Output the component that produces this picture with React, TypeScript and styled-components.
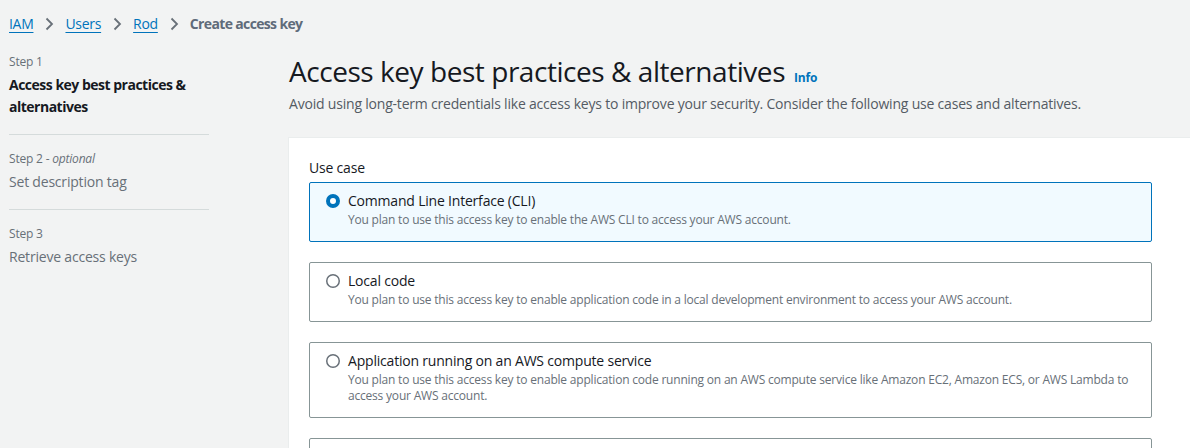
import React from "react";
import styled, { createGlobalStyle } from "styled-components";

const GlobalStyle = createGlobalStyle`
  html, body {
    margin: 0;
    padding: 0;
    background: #f2f3f3;
    font-family: "Open Sans", "Noto Sans", sans-serif;
    color: #16191f;
    letter-spacing: -0.2px;
  }
  * { box-sizing: border-box; }
`;

const Page = styled.div`
  width: 1190px;
  height: 448px;
  overflow: hidden;
  background: #f2f3f3;
`;

const Breadcrumbs = styled.nav`
  display: flex;
  align-items: center;
  height: 46px;
  padding: 1px 0 0 9px;
  font-size: 14px;
`;

const Crumb = styled.a`
  color: #0073bb;
  text-decoration: underline;
  text-underline-offset: 3px;
  text-decoration-thickness: 1px;
  font-weight: 400;
  line-height: 20px;
  letter-spacing: -0.3px;
`;

const CurrentCrumb = styled.span`
  color: #5f6b7a;
  font-weight: 700;
  line-height: 20px;
  letter-spacing: -0.65px;
`;

const Sep = styled.span`
  display: inline-flex;
  align-items: center;
  margin: 0 11px 0 11px;
  color: #687078;
`;

const Layout = styled.div`
  display: flex;
  align-items: flex-start;
`;

const Sidebar = styled.aside`
  width: 200px;
  margin-left: 9px;
  margin-top: 8px;
  flex-shrink: 0;
`;

const StepItem = styled.div<{ last?: boolean }>`
  padding-bottom: 16px;
  margin-bottom: 16px;
  border-bottom: ${(p) => (p.last ? "none" : "1px solid #d5dbdb")};
`;

const StepLabel = styled.div`
  font-size: 12px;
  line-height: 16px;
  color: #687078;
  margin-bottom: 4px;
`;

const Optional = styled.i`
  font-style: italic;
`;

const StepTitle = styled.div<{ active?: boolean }>`
  font-size: 14px;
  line-height: 22px;
  font-weight: ${(p) => (p.active ? 700 : 400)};
  letter-spacing: ${(p) => (p.active ? "-0.5px" : "-0.2px")};
  color: ${(p) => (p.active ? "#16191f" : "#687078")};
`;

const Main = styled.main`
  flex: 1;
  margin-left: 79px;
  margin-top: 7px;
  min-width: 0;
`;

const Header = styled.header`
  padding-left: 1px;
  padding-bottom: 22px;
`;

const TitleRow = styled.div`
  display: flex;
  align-items: baseline;
  gap: 9px;
  height: 40px;
`;

const Title = styled.h1`
  margin: 0;
  font-size: 28px;
  font-weight: 400;
  line-height: 36px;
  letter-spacing: -0.45px;
  color: #16191f;
`;

const InfoLink = styled.a`
  font-size: 12px;
  font-weight: 700;
  color: #0073bb;
  letter-spacing: -0.2px;
  text-decoration: none;
`;

const Description = styled.p`
  margin: 0;
  font-size: 14px;
  line-height: 22px;
  color: #545b64;
`;

const Container = styled.section`
  background: #ffffff;
  border-top: 1px solid #eaeded;
  border-left: 1px solid #eaeded;
  padding: 19px 38px 0 20px;
  min-height: 320px;
`;

const FieldLabel = styled.div`
  font-size: 14px;
  line-height: 22px;
  color: #16191f;
  margin-bottom: 3px;
`;

const CardList = styled.div`
  display: flex;
  flex-direction: column;
  gap: 20px;
`;

const Card = styled.label<{ selected?: boolean }>`
  display: flex;
  align-items: flex-start;
  gap: 8px;
  padding: 7px 16px 13px 16px;
  border: 1px solid ${(p) => (p.selected ? "#0073bb" : "#879596")};
  background: ${(p) => (p.selected ? "#f1faff" : "#ffffff")};
  border-radius: 2px;
  cursor: pointer;
`;

const RadioWrap = styled.span`
  flex-shrink: 0;
  width: 14px;
  height: 22px;
  display: flex;
  align-items: center;
`;

const CardBody = styled.div`
  display: flex;
  flex-direction: column;
`;

const CardTitle = styled.div`
  font-size: 14px;
  line-height: 22px;
  color: #16191f;
`;

const CardText = styled.div`
  font-size: 12px;
  line-height: 16px;
  color: #687078;
`;

const Chevron = () => (
  <svg width="10" height="14" viewBox="0 0 10 14" aria-hidden="true">
    <path d="M2.5 1.5 L8 7 L2.5 12.5" fill="none" stroke="currentColor" strokeWidth="1.8" />
  </svg>
);

const Radio = ({ checked }: { checked?: boolean }) =>
  checked ? (
    <svg width="14" height="14" viewBox="0 0 14 14">
      <circle cx="7" cy="7" r="5" fill="#ffffff" stroke="#0073bb" strokeWidth="4" />
    </svg>
  ) : (
    <svg width="14" height="14" viewBox="0 0 14 14">
      <circle cx="7" cy="7" r="6.25" fill="#ffffff" stroke="#687078" strokeWidth="1.5" />
    </svg>
  );

const options = [
  {
    title: "Command Line Interface (CLI)",
    text: "You plan to use this access key to enable the AWS CLI to access your AWS account.",
    selected: true,
  },
  {
    title: "Local code",
    text: "You plan to use this access key to enable application code in a local development environment to access your AWS account.",
  },
  {
    title: "Application running on an AWS compute service",
    text: "You plan to use this access key to enable application code running on an AWS compute service like Amazon EC2, Amazon ECS, or AWS Lambda to access your AWS account.",
  },
  {
    title: "Third-party service",
    text: "You plan to use this access key to enable access for a third-party application or service that monitors or manages your AWS resources.",
  },
];

export default function App() {
  return (
    <Page>
      <GlobalStyle />
      <Breadcrumbs>
        <Crumb href="#">IAM</Crumb>
        <Sep><Chevron /></Sep>
        <Crumb href="#">Users</Crumb>
        <Sep><Chevron /></Sep>
        <Crumb href="#">Rod</Crumb>
        <Sep><Chevron /></Sep>
        <CurrentCrumb>Create access key</CurrentCrumb>
      </Breadcrumbs>
      <Layout>
        <Sidebar>
          <StepItem>
            <StepLabel>Step 1</StepLabel>
            <StepTitle active>Access key best practices &amp; alternatives</StepTitle>
          </StepItem>
          <StepItem>
            <StepLabel>
              Step 2 - <Optional>optional</Optional>
            </StepLabel>
            <StepTitle>Set description tag</StepTitle>
          </StepItem>
          <StepItem last>
            <StepLabel>Step 3</StepLabel>
            <StepTitle>Retrieve access keys</StepTitle>
          </StepItem>
        </Sidebar>
        <Main>
          <Header>
            <TitleRow>
              <Title>Access key best practices &amp; alternatives</Title>
              <InfoLink href="#">Info</InfoLink>
            </TitleRow>
            <Description>
              Avoid using long-term credentials like access keys to improve your security. Consider the following use cases and alternatives.
            </Description>
          </Header>
          <Container>
            <FieldLabel>Use case</FieldLabel>
            <CardList>
              {options.map((o) => (
                <Card key={o.title} selected={o.selected}>
                  <RadioWrap>
                    <Radio checked={o.selected} />
                  </RadioWrap>
                  <CardBody>
                    <CardTitle>{o.title}</CardTitle>
                    <CardText>{o.text}</CardText>
                  </CardBody>
                </Card>
              ))}
            </CardList>
          </Container>
        </Main>
      </Layout>
    </Page>
  );
}
